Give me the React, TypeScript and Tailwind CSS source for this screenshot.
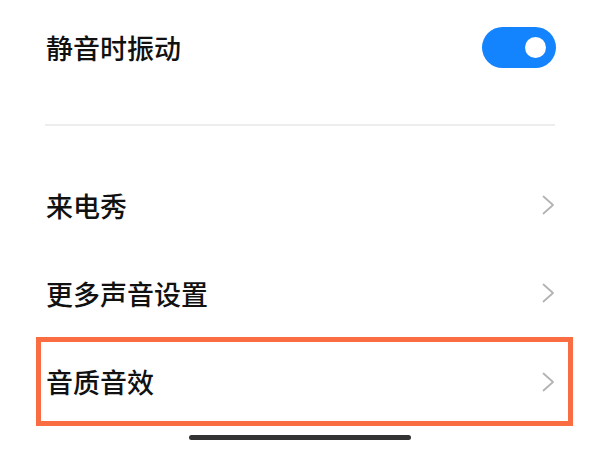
import React from 'react'

const font = { fontFamily: '"Noto Sans CJK SC", "Noto Sans", sans-serif' }

function Chevron() {
  return (
    <svg width="13" height="20" viewBox="0 0 13 20" fill="none" className="shrink-0">
      <path d="M1.5 1.5 L11 10 L1.5 18.5" stroke="#b3b3b3" strokeWidth="1.8" strokeLinecap="round" strokeLinejoin="round" />
    </svg>
  )
}

function Toggle() {
  return (
    <div className="w-[74px] h-[41px] rounded-full bg-[#1384fd] flex items-center justify-end pr-[10px]">
      <div className="w-[21px] h-[21px] rounded-full bg-white" />
    </div>
  )
}

export default function App() {
  return (
    <div className="w-[600px] h-[450px] bg-white relative overflow-hidden" style={font}>
      <div className="h-[94px] flex items-center justify-between pl-[46px] pr-[44px]">
        <span className="text-[27px] font-medium text-[#111111] leading-none">静音时振动</span>
        <Toggle />
      </div>

      <div className="mt-[30px] mx-[45px] h-[2px] bg-[#ededed]" />

      <div className="mt-[35px] h-[88px] flex items-center justify-between pl-[46px] pr-[45px]">
        <span className="text-[27px] font-medium text-[#111111] leading-none">来电秀</span>
        <Chevron />
      </div>

      <div className="h-[88px] flex items-center justify-between pl-[46px] pr-[45px]">
        <span className="text-[27px] font-medium text-[#111111] leading-none">更多声音设置</span>
        <Chevron />
      </div>

      <div className="ml-[36px] mr-[27px] h-[89px] border-[5px] border-[#fa6d42] flex items-center justify-between pl-[5px] pr-[13px]">
        <span className="text-[27px] font-medium text-[#111111] leading-none">音质音效</span>
        <Chevron />
      </div>

      <div className="mt-[9px] mx-auto w-[222px] h-[5px] rounded-full bg-[#333333]" />
    </div>
  )
}
